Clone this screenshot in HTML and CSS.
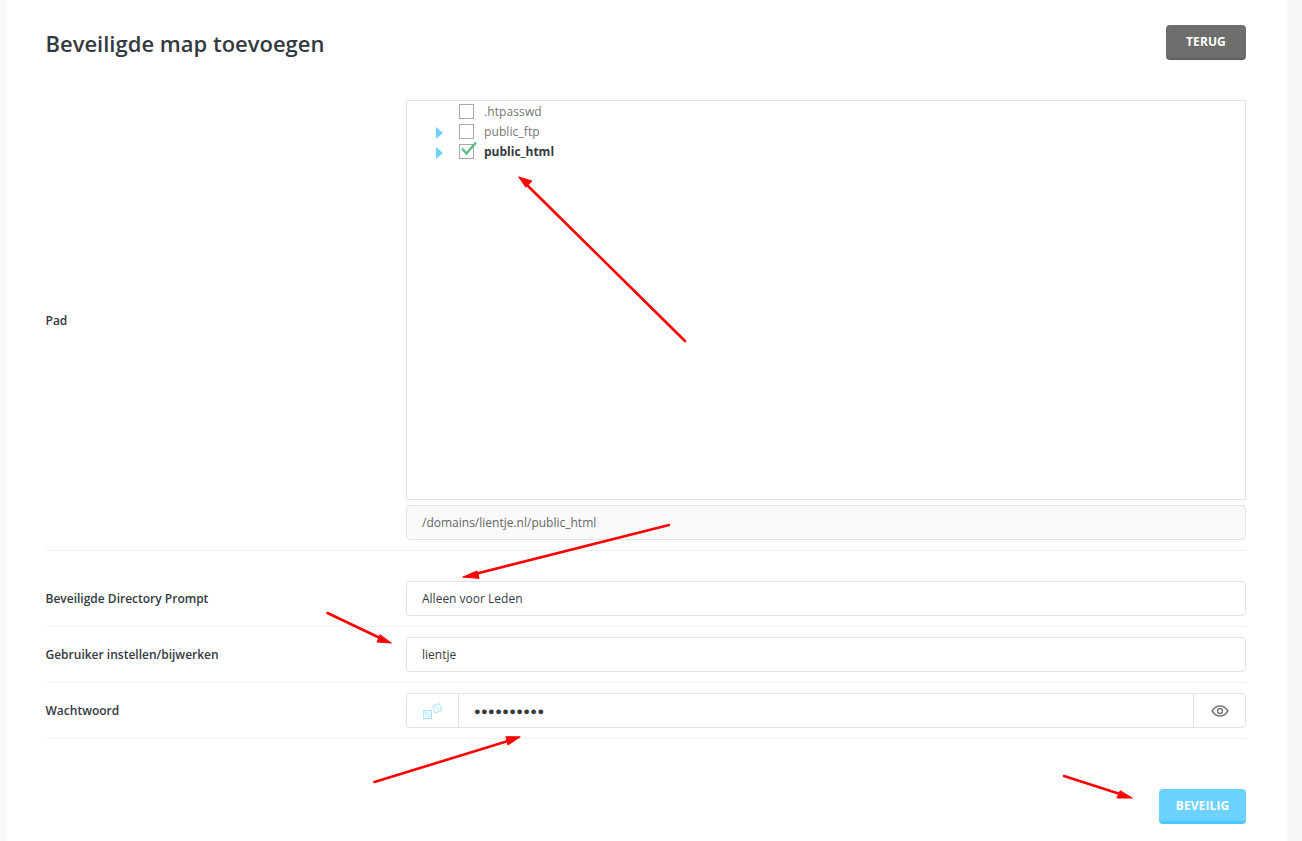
FILE: index.html
```html
<!DOCTYPE html>
<html lang="nl">
<head>
<meta charset="utf-8">
<title>Beveiligde map toevoegen</title>
<link rel="stylesheet" href="styles.css">
</head>
<body>
<main class="card">
  <header class="head">
    <h1 class="title">Beveiligde map toevoegen</h1>
    <button class="btn btn-grey" type="button">TERUG</button>
  </header>

  <div class="row row-path">
    <div class="label">Pad</div>
    <div class="control stack">
      <div class="tree">
        <div class="node"><span class="toggle"></span><span class="check"></span><span class="name">.htpasswd</span></div>
        <div class="node"><span class="toggle"><svg width="7" height="12" viewBox="0 0 7 12"><path d="M0 0l7 6-7 6z" fill="#6dd2ff"/></svg></span><span class="check"></span><span class="name">public_ftp</span></div>
        <div class="node"><span class="toggle"><svg width="7" height="12" viewBox="0 0 7 12"><path d="M0 0l7 6-7 6z" fill="#6dd2ff"/></svg></span><span class="check"><svg class="tick" width="18" height="15" viewBox="0 0 18 15"><path d="M2 7.5l4.5 5L16 1.5" fill="none" stroke="#5bbf85" stroke-width="2.4"/></svg></span><span class="name name-on">public_html</span></div>
      </div>
      <div class="field field-read">/domains/lientje.nl/public_html</div>
    </div>
  </div>

  <div class="row row-first">
    <div class="label">Beveiligde Directory Prompt</div>
    <div class="control"><div class="field">Alleen voor Leden</div></div>
  </div>
  <div class="row">
    <div class="label">Gebruiker instellen/bijwerken</div>
    <div class="control"><div class="field">lientje</div></div>
  </div>
  <div class="row">
    <div class="label">Wachtwoord</div>
    <div class="control">
      <div class="group">
        <span class="addon addon-left">
          <svg width="22" height="18" viewBox="0 0 22 18" fill="none" stroke="#a5e3ff" stroke-width="1"><rect x="1.5" y="8.5" width="8" height="8" fill="#eef9ff"/><rect x="11.5" y="2.5" width="7.5" height="7.5" rx="1.5" transform="rotate(-20 15.2 6.2)"/><g fill="#a5e3ff" stroke="none"><circle cx="3.7" cy="10.7" r=".8"/><circle cx="7.3" cy="14.3" r=".8"/><circle cx="5.5" cy="12.5" r=".8"/><circle cx="14.2" cy="5" r=".8"/><circle cx="16.2" cy="7.4" r=".8"/></g></svg>
        </span>
        <span class="pass">●●●●●●●●●●</span>
        <span class="addon addon-right">
          <svg width="18" height="12" viewBox="0 0 18 12" fill="none" stroke="#777" stroke-width="1.4"><path d="M1 6c2-3 5-5 8-5s6 2 8 5c-2 3-5 5-8 5S3 9 1 6z"/><circle cx="9" cy="6" r="2.5"/></svg>
        </span>
      </div>
    </div>
  </div>

  <footer class="foot">
    <button class="btn btn-blue" type="button">BEVEILIG</button>
  </footer>
</main>

<svg class="arrows" width="1302" height="841" viewBox="0 0 1302 841">
  <g stroke="#f00" stroke-width="2.6" stroke-linecap="round" fill="#f00">
    <path d="M685 341L527 185"/><path d="M519 177l13 4-6 6z" stroke-width="1"/>
    <path d="M669 525L475 574"/><path d="M463 577l14-6 2 7z" stroke-width="1"/>
    <path d="M327.500 613L380 638"/><path d="M391 643l-14-1 3-7z" stroke-width="1"/>
    <path d="M374.500 782L508 741"/><path d="M520 737l-12 8-2-8z" stroke-width="1"/>
    <path d="M1064 776L1120 794"/><path d="M1132 798l-15 0 3-7z" stroke-width="1"/>
  </g>
</svg>
</body>
</html>
```
FILE: styles.css
```css
* { box-sizing: border-box; }
html, body { margin: 0; height: 100%; overflow: hidden; }
body {
  background: #f8f8f8;
  font-family: "Open Sans", sans-serif;
  font-size: 12px;
  color: #333a40;
  position: relative;
  padding: 0 15px 0 6px;
}
.card {
  background: #fff;
  height: 841px;
  padding: 25px 41px 0 40px;
}
.head {
  display: flex;
  justify-content: space-between;
  align-items: center;
  height: 35px;
  margin-bottom: 30px;
}
.title {
  margin: 0 0 0 -0.5px;
  font-size: 22px;
  font-weight: 600;
  color: #333a40;
}
.btn {
  border: 0;
  border-radius: 4px;
  height: 35px;
  font-family: inherit;
  font-size: 12px;
  font-weight: 700;
  letter-spacing: 0.1px;
  color: #fff;
  padding: 0;
}
.btn-grey {
  width: 80px;
  background: #6d6e6c;
  border-bottom: 2px solid #5f605e;
}
.btn-blue {
  width: 87px;
  background: #6dd2ff;
  border-bottom: 3px solid #4cc6ff;
}
.row {
  display: grid;
  grid-template-columns: 30% 70%;
  align-items: center;
  padding: 10px 0;
  border-bottom: 1px solid #eeeeee;
}
.row-first { padding-top: 30px; }
.label { font-weight: 600; color: #333a40; margin-left: -0.5px; }
.stack { display: flex; flex-direction: column; gap: 5px; }
.tree {
  height: 400px;
  border: 1px solid #dfe3eb;
}
.node {
  display: flex;
  align-items: center;
  height: 20px;
  color: #777;
}
.toggle {
  width: 7px;
  height: 12px;
  margin: 4px 16px 0 29px;
  display: block;
  line-height: 0;
}
.check {
  width: 15px;
  height: 15px;
  border: 1px solid #a8a8a8;
  position: relative;
  margin-right: 10px;
  background: #fff;
}
.tick { position: absolute; left: 0; top: -4px; }
.name { letter-spacing: 0.1px; }
.name-on { font-weight: 700; color: #333a40; letter-spacing: 0; }
.field {
  height: 35px;
  line-height: 33px;
  border: 1px solid #e3e3e3;
  border-radius: 4px;
  padding: 0 15px;
  background: #fff;
}
.field-read { background: #fafafa; color: #666; }
.group {
  display: flex;
  align-items: center;
  height: 35px;
  border: 1px solid #e3e3e3;
  border-radius: 4px;
}
.addon {
  width: 52px;
  height: 100%;
  display: flex;
  align-items: center;
  justify-content: center;
}
.addon-left { border-right: 1px solid #e3e3e3; }
.addon-right { border-left: 1px solid #e3e3e3; }
.pass {
  flex: 1;
  padding-left: 15px;
  font-size: 11px;
  letter-spacing: 0.4px;
  color: #333a40;
}
.foot {
  display: flex;
  justify-content: flex-end;
  padding-top: 50px;
}
.arrows { position: absolute; left: 0; top: 0; pointer-events: none; }
```
